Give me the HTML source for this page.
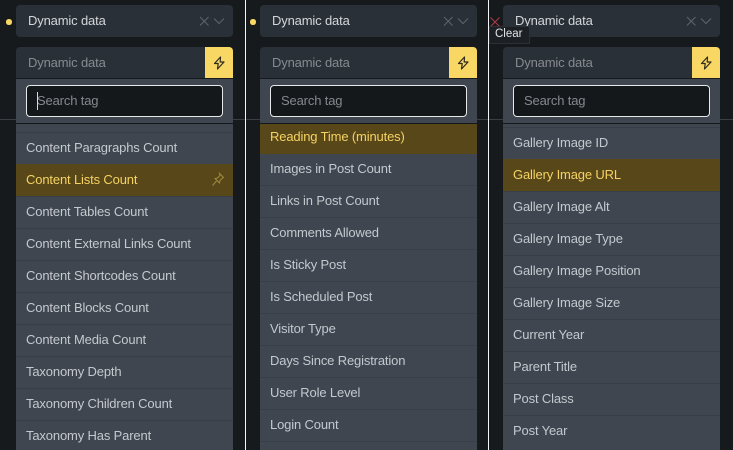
<!DOCTYPE html>
<html><head><meta charset="utf-8">
<style>
*{box-sizing:border-box}
html,body{margin:0;padding:0;width:733px;height:450px;overflow:hidden;background:#171a1d;font-family:"Liberation Sans",sans-serif}
.abs{position:absolute}
.panel{position:absolute;top:0;height:450px;overflow:hidden;background:#171a1d}
.hr{position:absolute;top:119px;left:0;right:0;height:1px;background:#3a3f45}
.sel{position:absolute;top:5px;height:32px;width:217px;background:#2a3038;border-radius:4px;color:#d3d6da;font-size:13px;line-height:31px;padding-left:12px;letter-spacing:-.15px}
.head{position:absolute;top:47px;height:31px;width:217px;background:#2a3038;border-radius:4px 4px 0 0;color:#878b90;font-size:13px;line-height:31px;padding-left:12px;letter-spacing:-.15px}
.bolt{position:absolute;right:0;top:0;width:28px;height:31px;background:#f9d764;border-radius:0 4px 0 0}
.drop{position:absolute;top:79px;width:217px;height:371px;background:#3f4650;overflow:hidden}
.sw{position:absolute;top:6px;left:10px;width:197px;height:32px;background:#15181b;border:1px solid #e6e8ea;border-radius:4px;color:#85898e;font-size:13px;line-height:30px;padding-left:10px;letter-spacing:-.15px}
.caret{position:absolute;left:10px;top:6px;width:1px;height:18px;background:#d8dadd}
.sep{position:absolute;top:44px;left:0;right:0;height:1px;background:#15181b}
.it{position:absolute;left:0;right:0;height:32px;line-height:29px;padding-left:10px;font-size:13px;color:#c5c9ce;letter-spacing:-.15px;border-top:1px solid #383e47}
.on{background:#584719;color:#f5d262;border-top:0;line-height:31px}
.dot{position:absolute;top:19px;width:5.500px;height:5.500px;border-radius:50%;background:#f9d764}
svg{position:absolute;display:block}
</style></head><body>

<div class="panel" style="left:0;width:245px">
<div class="hr"></div>
<div class="dot" style="left:6px"></div>
<div class="sel" style="left:16px">Dynamic data
<svg style="left:183px;top:11px" width="12" height="12" viewBox="0 0 12 12" fill="none" stroke="#5f656d" stroke-width="1"><path d="M1 1l8.500 8.500M9.500 1L1 9.500"/></svg>
<svg style="left:197px;top:12px" width="12" height="8" viewBox="0 0 12 8" fill="none" stroke="#5f656d" stroke-width="1"><path d="M1 1.500l5 5 5-5"/></svg></div>
<div class="head" style="left:16px">Dynamic data<div class="bolt"><svg style="left:7px;top:7px" width="14" height="16" viewBox="0 0 14 16" fill="none" stroke="#2f2c1e" stroke-width="1.200"><path d="M8.500 3L2.500 9.500H6.200L5.500 15L12 8H8.200z" stroke-linejoin="round"/></svg></div></div>
<div class="drop" style="left:16px">
<div class="sw"><div class="caret"></div>Search tag</div><div class="sep"></div>
<div class="it" style="top:53px">Content Paragraphs Count</div>
<div class="it on" style="top:85px">Content Lists Count
<svg style="left:195px;top:8px" width="14" height="15" viewBox="0 0 14 15" fill="none" stroke="#a08a3a" stroke-width="1"><path d="M8.500 1.500l4 4-1 .5-2.500 2.500-.5 2.500-4.500-4.500 2.500-.5L9 3.500zM5.500 9L1.500 13.500"/></svg></div>
<div class="it" style="top:117px">Content Tables Count</div>
<div class="it" style="top:149px">Content External Links Count</div>
<div class="it" style="top:181px">Content Shortcodes Count</div>
<div class="it" style="top:213px">Content Blocks Count</div>
<div class="it" style="top:245px">Content Media Count</div>
<div class="it" style="top:277px">Taxonomy Depth</div>
<div class="it" style="top:309px">Taxonomy Children Count</div>
<div class="it" style="top:341px;height:30px">Taxonomy Has Parent</div>
</div></div>
<div class="abs" style="left:245px;top:0;width:1px;height:450px;background:#f4f5f6"></div>

<div class="panel" style="left:246px;width:242px">
<div class="hr"></div>
<div class="dot" style="left:4px"></div>
<div class="sel" style="left:14px">Dynamic data
<svg style="left:183px;top:11px" width="12" height="12" viewBox="0 0 12 12" fill="none" stroke="#5f656d" stroke-width="1"><path d="M1 1l8.500 8.500M9.500 1L1 9.500"/></svg>
<svg style="left:197px;top:12px" width="12" height="8" viewBox="0 0 12 8" fill="none" stroke="#5f656d" stroke-width="1"><path d="M1 1.500l5 5 5-5"/></svg></div>
<div class="head" style="left:14px">Dynamic data<div class="bolt"><svg style="left:7px;top:7px" width="14" height="16" viewBox="0 0 14 16" fill="none" stroke="#2f2c1e" stroke-width="1.200"><path d="M8.500 3L2.500 9.500H6.200L5.500 15L12 8H8.200z" stroke-linejoin="round"/></svg></div></div>
<div class="drop" style="left:14px">
<div class="sw">Search tag</div><div class="sep"></div>
<div class="it on" style="top:45px;height:30px;line-height:26px">Reading Time (minutes)</div>
<div class="it" style="top:74px;border-top:0;padding-top:1px">Images in Post Count</div>
<div class="it" style="top:106px">Links in Post Count</div>
<div class="it" style="top:138px">Comments Allowed</div>
<div class="it" style="top:170px">Is Sticky Post</div>
<div class="it" style="top:202px">Is Scheduled Post</div>
<div class="it" style="top:234px">Visitor Type</div>
<div class="it" style="top:266px">Days Since Registration</div>
<div class="it" style="top:298px">User Role Level</div>
<div class="it" style="top:330px">Login Count</div>
<div class="it" style="top:362px;height:9px"></div>
</div></div>
<div class="abs" style="left:488px;top:0;width:1px;height:450px;background:#f4f5f6"></div>

<div class="panel" style="left:489px;width:244px">
<div class="hr"></div>
<svg style="left:1px;top:17px" width="10" height="10" viewBox="0 0 10 10" fill="none" stroke="#b23a48" stroke-width="1"><path d="M.5.5l9 9M9.500.5l-9 9"/></svg>
<div class="sel" style="left:14px">Dynamic data
<svg style="left:183px;top:11px" width="12" height="12" viewBox="0 0 12 12" fill="none" stroke="#5f656d" stroke-width="1"><path d="M1 1l8.500 8.500M9.500 1L1 9.500"/></svg>
<svg style="left:197px;top:12px" width="12" height="8" viewBox="0 0 12 8" fill="none" stroke="#5f656d" stroke-width="1"><path d="M1 1.500l5 5 5-5"/></svg></div>
<div class="abs" style="left:0;top:26px;width:41px;height:18px;background:#1c2024;border:1px solid #2c3036;color:#e2e4e6;font-size:11.500px;line-height:15px;padding-left:5px">Clear</div>
<div class="head" style="left:14px">Dynamic data<div class="bolt"><svg style="left:7px;top:7px" width="14" height="16" viewBox="0 0 14 16" fill="none" stroke="#2f2c1e" stroke-width="1.200"><path d="M8.500 3L2.500 9.500H6.200L5.500 15L12 8H8.200z" stroke-linejoin="round"/></svg></div></div>
<div class="drop" style="left:14px">
<div class="sw">Search tag</div><div class="sep"></div>
<div class="it" style="top:48px">Gallery Image ID</div>
<div class="it on" style="top:80px">Gallery Image URL</div>
<div class="it" style="top:112px">Gallery Image Alt</div>
<div class="it" style="top:144px">Gallery Image Type</div>
<div class="it" style="top:176px">Gallery Image Position</div>
<div class="it" style="top:208px">Gallery Image Size</div>
<div class="it" style="top:240px">Current Year</div>
<div class="it" style="top:272px">Parent Title</div>
<div class="it" style="top:304px">Post Class</div>
<div class="it" style="top:336px">Post Year</div>
</div></div>
</body></html>
